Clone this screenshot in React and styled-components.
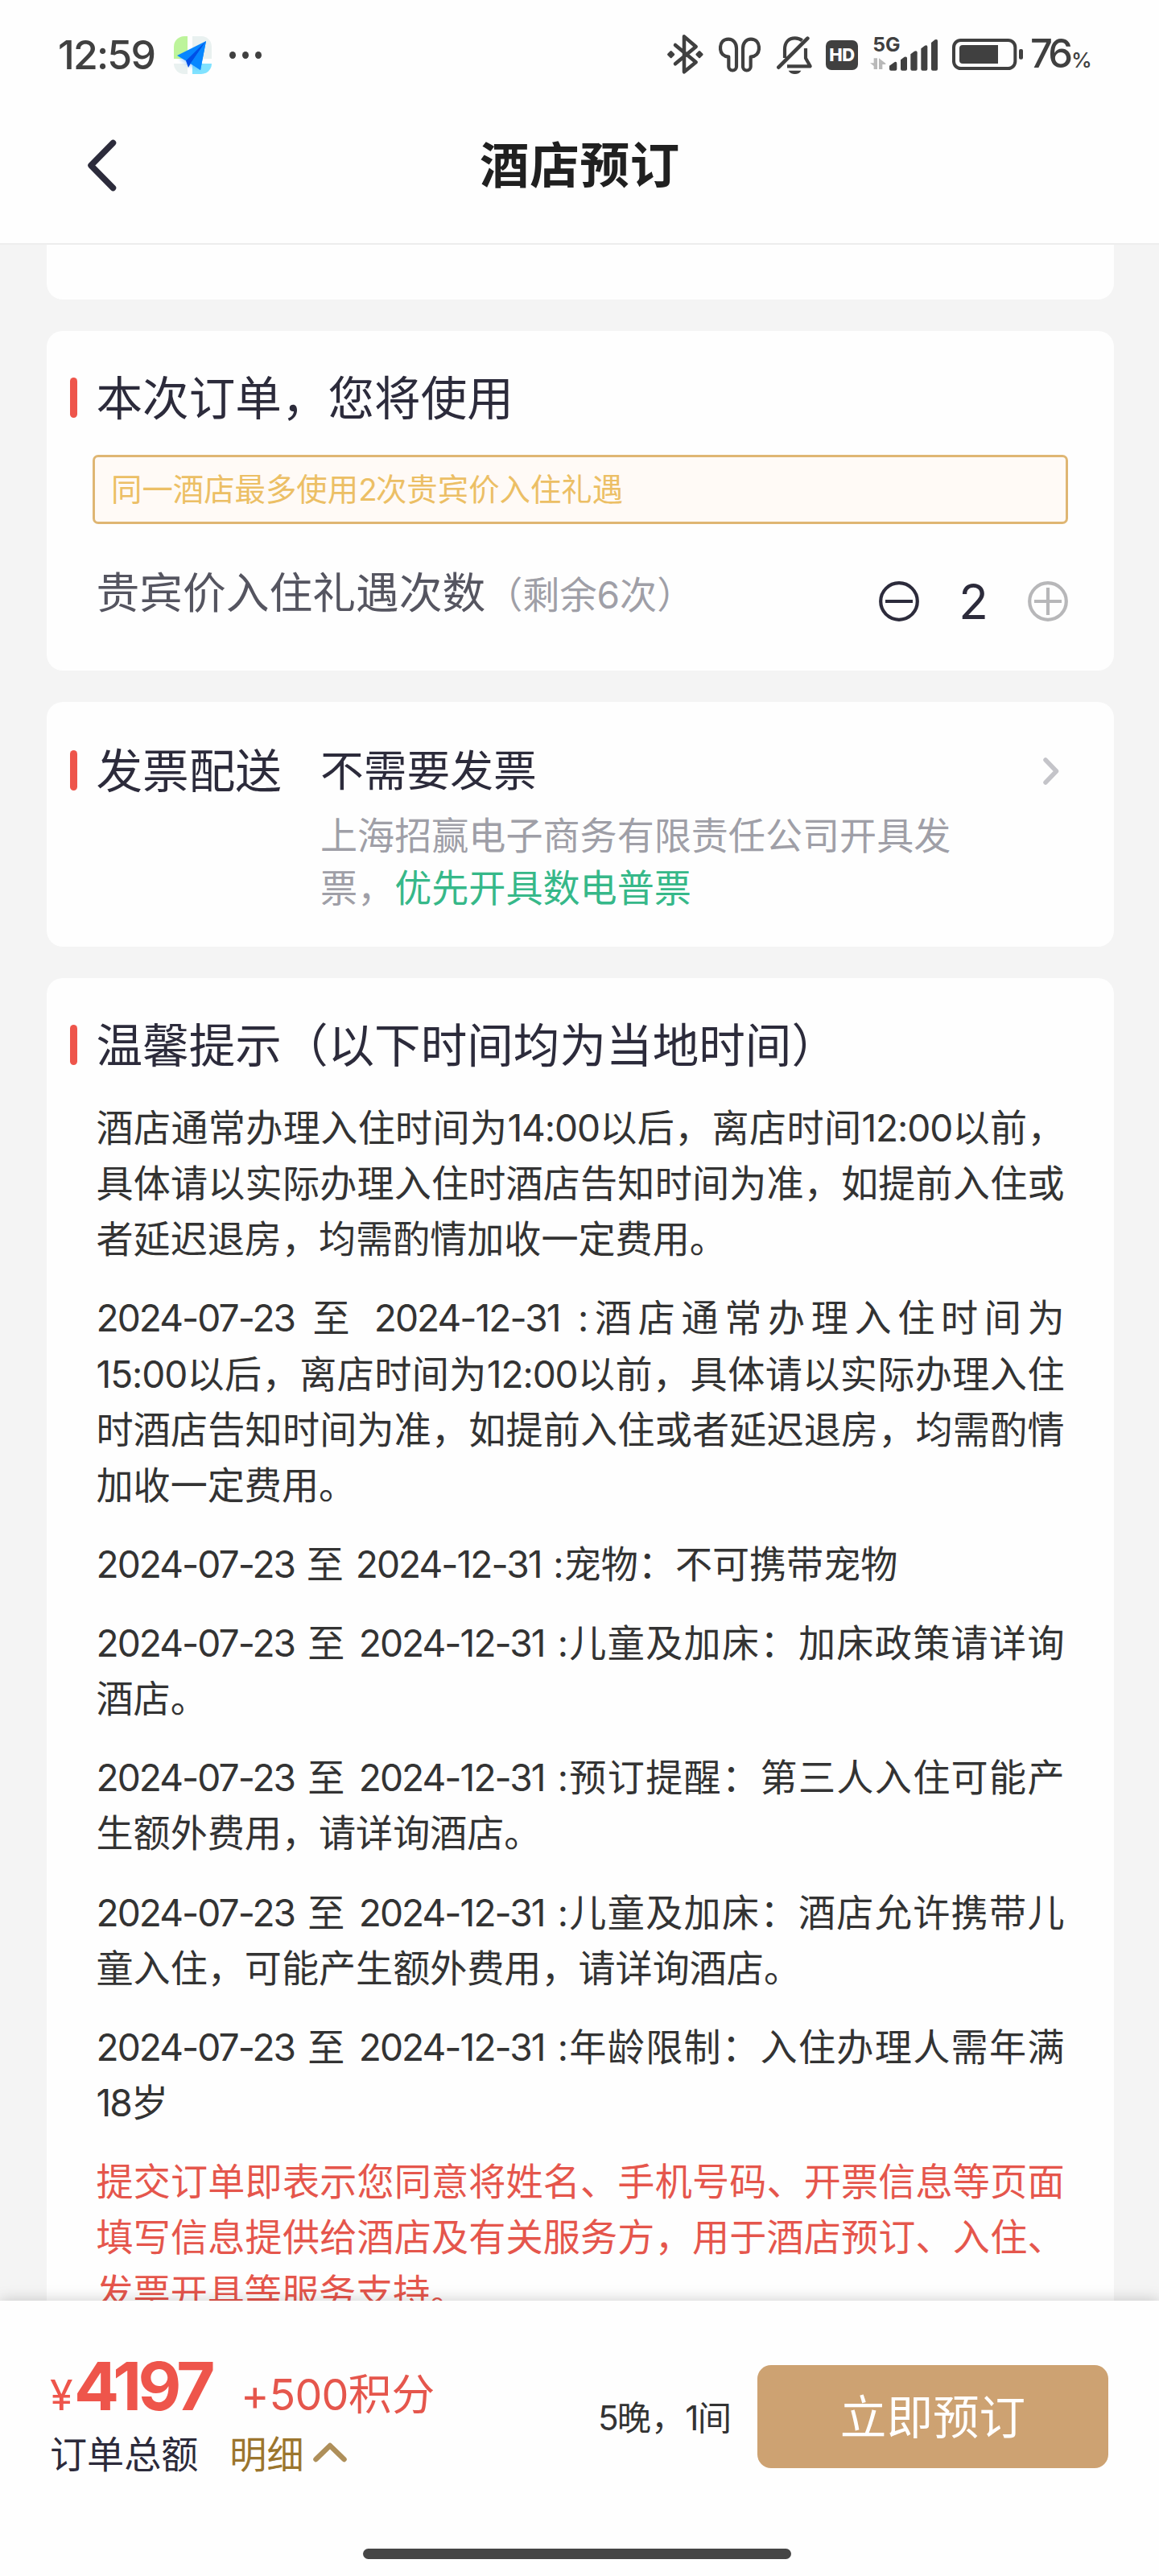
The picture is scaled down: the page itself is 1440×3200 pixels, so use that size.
import React, { useState } from "react";
import styled, { createGlobalStyle } from "styled-components";

const fontStack = `Inter, "Noto Sans CJK SC", sans-serif`;

const color = {
  ink: "#2c2b3b",
  body: "#333333",
  status: "#404040",
  muted: "#9f9fa7",
  red: "#ee554b",
  redText: "#e5564c",
  gold: "#cda272",
  page: "#f4f4f4",
};

const GlobalStyle = createGlobalStyle`
  * { box-sizing: border-box; }
  body {
    margin: 0;
    background: #fefefe;
    font-family: ${fontStack};
    text-spacing-trim: space-all;
    -webkit-font-smoothing: antialiased;
  }
  h1, h2, p { margin: 0; font-weight: 400; }
  button { font: inherit; border: 0; padding: 0; background: none; color: inherit; }
  svg { display: block; flex: none; }
`;

const Screen = styled.div`
  display: flex;
  flex-direction: column;
  width: 1440px;
  height: 3200px;
  overflow: hidden;
  background: ${color.page};
`;

/* ---------- status bar ---------- */

const Header = styled.header`
  flex: none;
  height: 304px;
  background: #fefefe;
  border-bottom: 2px solid #ededed;
`;

const StatusBar = styled.div`
  display: flex;
  justify-content: space-between;
  align-items: center;
  height: 64px;
  margin-top: 36px;
  padding: 0 84px 0 72px;
  color: ${color.status};
`;

const StatusGroup = styled.div`
  display: flex;
  align-items: center;
`;

const Clock = styled.span`
  width: 144px;
  font-size: 50px;
  line-height: 64px;
  letter-spacing: -1.8px;
  font-weight: 500;
  white-space: nowrap;
`;

const Dots = styled.span`
  display: flex;
  gap: 8px;
  margin-left: 22px;
`;

const Dot = styled.span`
  width: 8px;
  height: 9px;
  border-radius: 50%;
  background: ${color.status};
`;

const HdBadge = styled.span`
  display: flex;
  align-items: center;
  justify-content: center;
  width: 40px;
  height: 37px;
  margin: 0 15px 0 16px;
  border-radius: 7px;
  background: ${color.status};
  color: #fff;
  font-size: 22px;
  font-weight: 800;
  line-height: 1;
  letter-spacing: -0.5px;
`;

const BatteryLevel = styled.span`
  display: flex;
  align-items: baseline;
  width: 76px;
  margin: 5px 0 0 9px;
  font-size: 49px;
  line-height: 64px;
  font-weight: 500;
  letter-spacing: -5px;
  white-space: nowrap;

  small {
    margin-left: 3px;
    font-size: 26px;
    letter-spacing: 0;
  }
`;

const AppIcon = () => (
  <svg width="47" height="47" viewBox="0 0 47 47">
    <defs>
      <clipPath id="tile"><rect width="47" height="47" rx="13" /></clipPath>
      <filter id="soft" x="-30%" y="-30%" width="160%" height="160%"><feGaussianBlur stdDeviation="2.2" /></filter>
    </defs>
    <g clipPath="url(#tile)">
      <rect width="47" height="47" fill="#fff" />
      <rect width="17" height="28" fill="#bdf49b" />
      <rect x="23" width="24" height="28" fill="#e9f1f0" />
      <rect y="34" width="17" height="13" fill="#e9f1f0" />
      <rect x="23" y="34" width="24" height="13" fill="#80e2ff" />
      <path d="M7 28 L34 12 L31 42 L18 36Z" fill="#4aa5ff" opacity=".45" filter="url(#soft)" />
    </g>
    <path d="M40 6 L4 24 L15 30.5 L33 42Z" fill="#0787ff" />
    <path d="M40 6 L15 30.5 L18 39 L21 33.5Z" fill="#0050e6" />
    <path d="M40 6 L21 33.5 L33 42Z" fill="#0787ff" />
  </svg>
);

const BluetoothIcon = () => (
  <svg width="45" height="64" viewBox="27 0 135 192" fill="none" stroke={color.status}>
    <path d="M57 60 L134 124 L90 160 V28 L134 66 L57 130" strokeWidth="13.5" strokeLinecap="round" strokeLinejoin="round" />
    <path d="M41 86 L50 95 L41 104 L32 95Z M147 86 L156 95 L147 104 L138 95Z" fill={color.status} strokeWidth="9" strokeLinejoin="round" />
  </svg>
);

const EarbudsIcon = styled(({ className }) => (
  <svg className={className} width="52" height="64" viewBox="219 0 156 192" fill="none" stroke={color.status} strokeWidth="12.5" strokeLinejoin="round">
    <path d="M285 72 V140 a14.5 14.5 0 0 1 -29 0 V104 C236 102 225 90 225 71 C225 50 237 38 255 38 S285 52 285 72Z" />
    <path d="M309 72 V140 a14.5 14.5 0 0 0 29 0 V104 C358 102 369 90 369 71 C369 50 357 38 339 38 S309 52 309 72Z" />
  </svg>
))`
  margin-left: 19px;
`;

const MutedBellIcon = styled(({ className }) => (
  <svg className={className} width="45" height="64" viewBox="435 0 135 192" fill="none" stroke={color.status} strokeWidth="12.5">
    <path d="M442 143 L550 35" strokeLinecap="round" strokeWidth="14" />
    <path d="M465 108 V76 C465 48 481 34 503 34 C515 34 523 37 530 43" />
    <path d="M543 72 V109 L560 139 H474" strokeLinejoin="round" />
    <path d="M479 155 H526 C520 172 486 172 479 155Z" fill={color.status} stroke="none" />
  </svg>
))`
  margin-left: 20px;
`;

const SignalIcon = () => (
  <svg width="85" height="64" viewBox="27 0 255 192" fill={color.status}>
    <text x="37" y="84" fontFamily="Inter, sans-serif" fontWeight="700" fontSize="72" textLength="103" lengthAdjust="spacingAndGlyphs">5G</text>
    <path d="M54 109 V150 H41 V138 L27 127 H41 V109Z M60 150 V109 L85 128 V132 H73 V150Z" fill="#b9b9b9" />
    <path d="M99 137 L119 123 Q127 121 127 129 V149 Q127 155 121 155 H105 Q99 155 99 149Z" />
    <path d="M141 115 L155 104 Q165 101 165 109 V149 Q165 155 159 155 H147 Q141 155 141 149Z" />
    <path d="M178 94 L192 83 Q203 79 203 88 V149 Q203 155 197 155 H184 Q178 155 178 149Z" />
    <path d="M217 73 L231 62 Q241 58 241 67 V149 Q241 155 235 155 H223 Q217 155 217 149Z" />
    <path d="M255 51 L269 40 Q279 36 279 45 V149 Q279 155 273 155 H261 Q255 155 255 149Z" />
  </svg>
);

const BatteryIcon = styled(({ className }) => (
  <svg className={className} width="88" height="64" viewBox="333 0 264 192">
    <rect x="339" y="42" width="229" height="105" rx="26" fill="none" stroke={color.status} strokeWidth="12" />
    <path d="M372 60 H504 V129 H372 Q360 129 360 117 V72 Q360 60 372 60Z" fill={color.status} />
    <rect x="582" y="75" width="15" height="38" rx="6" fill={color.status} />
  </svg>
))`
  margin-left: 17px;
`;

/* ---------- title bar ---------- */

const TitleBar = styled.div`
  display: grid;
  grid-template-columns: 48px 1fr 48px;
  align-items: center;
  height: 210px;
  padding: 0 100px 0 101px;
`;

const PageTitle = styled.h1`
  padding-top: 2px;
  text-align: center;
  font-size: 61.44px;
  line-height: 84px;
  font-weight: 700;
  letter-spacing: 0.8px;
  color: #202020;
`;

/* ---------- content ---------- */

const Content = styled.main`
  flex: 1;
  min-height: 0;
  overflow: hidden;
  display: flex;
  flex-direction: column;
  gap: 39px;
  padding: 0 56px 0 58px;
`;

const Card = styled.section`
  flex: none;
  height: ${(p) => p.$height}px;
  padding: ${(p) => p.$top || 0}px 57px 0 29px;
  background: #fefefe;
  border-radius: ${(p) => (p.$cut ? "0 0 20px 20px" : "20px")};
`;

const Heading = styled.div`
  display: flex;
  align-items: center;
  gap: 23.5px;
  height: 80px;
`;

const Marker = styled.span`
  flex: none;
  width: 9px;
  height: 50px;
  margin-bottom: 2px;
  border-radius: 5px;
  background: ${color.red};
`;

const HeadingText = styled.h2`
  font-size: 57.6px;
  line-height: 80px;
  color: ${color.ink};
  white-space: nowrap;
`;

const Notice = styled.div`
  height: 86px;
  margin: 30px 0 0 28px;
  padding-left: 20px;
  border: 3px solid #dfb673;
  border-radius: 7px;
  background: #fffaf6;
  color: #ecbf65;
  font-size: 38.4px;
  line-height: 80px;
  white-space: nowrap;
`;

const UsageRow = styled.div`
  display: flex;
  justify-content: space-between;
  margin: 48px 0 0 32.5px;
`;

const UsageLabel = styled.div`
  font-size: 53.76px;
  line-height: 75px;
  color: #555560;
  white-space: nowrap;
`;

const Remaining = styled.span`
  font-size: 46.08px;
  color: ${color.muted};
`;

const Stepper = styled.div`
  display: flex;
  align-items: center;
  margin-top: 23px;
  height: 50px;
`;

const Count = styled.span`
  width: 135px;
  text-align: center;
  font-size: 60px;
  line-height: 50px;
  color: ${color.ink};
`;

const InvoiceRow = styled.div`
  display: grid;
  grid-template-columns: 311px 1fr 31px;
  align-items: start;
`;

const InvoiceBody = styled.div`
  width: 810px;
  font-size: 53.76px;
  line-height: 80px;
  color: ${color.ink};
`;

const InvoiceHint = styled.p`
  margin-top: 8px;
  font-size: 46.08px;
  line-height: 65px;
  color: ${color.muted};

  em {
    font-style: normal;
    color: #36b889;
  }
`;

const ArrowSlot = styled.div`
  display: flex;
  align-items: center;
  height: 80px;
`;

const Tips = styled.div`
  display: flex;
  flex-direction: column;
  gap: 29px;
  width: 1203px;
  margin: 28px 0 0 32.5px;
`;

const Tip = styled.p`
  font-size: 46.08px;
  line-height: 69.12px;
  word-spacing: 1.8px;
  text-align: justify;
  color: ${(p) => (p.$warn ? color.redText : color.body)};
`;

const Latin = styled.span`
  letter-spacing: ${(p) => (p.$time ? "-0.024em" : "-0.042em")};
`;

/* ---------- footer ---------- */

const Footer = styled.footer`
  position: relative;
  flex: none;
  display: flex;
  flex-direction: column;
  align-items: center;
  height: 342px;
  background: #fefefe;
  box-shadow: 0 0 18px rgba(0, 0, 0, 0.2);
`;

const Checkout = styled.div`
  display: flex;
  justify-content: space-between;
  width: 100%;
  height: 308px;
  padding: 0 63px 0 62px;
`;

const Totals = styled.div`
  padding-top: 62px;
`;

const PriceLine = styled.div`
  display: flex;
  align-items: baseline;
  height: 88px;
  line-height: 88px;
  color: ${color.red};
  white-space: nowrap;
`;

const Currency = styled.span`
  width: 30px;
  font-size: 52px;
  letter-spacing: -2px;
`;

const Amount = styled.span`
  width: 207px;
  font-size: 83px;
  font-weight: 700;
  letter-spacing: -4.6px;
`;

const Points = styled.span`
  font-size: 53.76px;
  color: ${color.redText};

  ${Latin} {
    letter-spacing: -0.015em;
  }
`;

const SummaryLine = styled.div`
  display: flex;
  align-items: center;
  height: 76px;
  font-size: 46.08px;
  color: ${color.ink};
`;

const DetailToggle = styled.button`
  display: flex;
  align-items: center;
  gap: 10px;
  margin-left: 39px;
  color: #9b752d;
`;

const Actions = styled.div`
  display: flex;
  align-items: center;
  gap: 32px;
  height: 128px;
  margin-top: 80px;
`;

const Stay = styled.span`
  padding-bottom: 3px;
  font-size: 42.24px;
  color: ${color.body};
  white-space: nowrap;
`;

const BookButton = styled.button`
  width: 436px;
  height: 128px;
  padding-bottom: 7px;
  border-radius: 17px;
  background: ${color.gold};
  color: #fff;
  font-size: 57.6px;
`;

const HomeIndicator = styled.span`
  width: 532px;
  height: 13px;
  margin-left: -6px;
  border-radius: 7px;
  background: #464646;
`;

/* ---------- pieces ---------- */

const BackIcon = () => (
  <svg width="48" height="72" viewBox="0 0 48 72" fill="none" stroke={color.ink} strokeWidth="7.5" strokeLinecap="round" strokeLinejoin="round">
    <path d="M39.5 8.5 L12 36.5 L39.5 64.5" />
  </svg>
);

const RoundIcon = ({ plus, stroke }) => (
  <svg width="50" height="50" viewBox="0 0 50 50" fill="none" stroke={stroke} strokeWidth="4.2">
    <circle cx="25" cy="25" r="22.8" />
    <path d={plus ? "M8 25 H42 M25 8 V42" : "M8 25 H42"} />
  </svg>
);

const latinRun = /([0-9][0-9:\-]*)/;

const Mixed = ({ children }) =>
  children.split(latinRun).map((part, i) =>
    i % 2 ? <Latin key={i} $time={part.includes(":")}>{part}</Latin> : part
  );

const SectionHeading = ({ children }) => (
  <Heading>
    <Marker />
    <HeadingText>{children}</HeadingText>
  </Heading>
);

/* \u2060 keeps a time together with the character that follows it */
const tips = [
  "酒店通常办理入住时间为14:00以后，离店时间12:00以前，具体请以实际办理入住时酒店告知时间为准，如提前入住或者延迟退房，均需酌情加收一定费用。",
  "2024-07-23 至 2024-12-31 :酒店通常办理入住时间为15:00\u2060以后，离店时间为12:00以前，具体请以实际办理入住时酒店告知时间为准，如提前入住或者延迟退房，均需酌情加收一定费用。",
  "2024-07-23 至 2024-12-31 :宠物：不可携带宠物",
  "2024-07-23 至 2024-12-31 :儿童及加床：加床政策请详询酒店。",
  "2024-07-23 至 2024-12-31 :预订提醒：第三人入住可能产生额外费用，请详询酒店。",
  "2024-07-23 至 2024-12-31 :儿童及加床：酒店允许携带儿童入住，可能产生额外费用，请详询酒店。",
  "2024-07-23 至 2024-12-31 :年龄限制：入住办理人需年满18岁",
];

export default function App() {
  const [count, setCount] = useState(2);

  return (
    <Screen lang="zh-CN">
      <GlobalStyle />
      <Header>
        <StatusBar>
          <StatusGroup>
            <Clock>12:59</Clock>
            <AppIcon />
            <Dots><Dot /><Dot /><Dot /></Dots>
          </StatusGroup>
          <StatusGroup>
            <BluetoothIcon />
            <EarbudsIcon />
            <MutedBellIcon />
            <HdBadge>HD</HdBadge>
            <SignalIcon />
            <BatteryIcon />
            <BatteryLevel>76<small>%</small></BatteryLevel>
          </StatusGroup>
        </StatusBar>
        <TitleBar>
          <button aria-label="返回"><BackIcon /></button>
          <PageTitle>酒店预订</PageTitle>
        </TitleBar>
      </Header>

      <Content>
        <Card $height={68} $cut />

        <Card $height={422} $top={44}>
          <SectionHeading>本次订单，您将使用</SectionHeading>
          <Notice><Mixed>同一酒店最多使用2次贵宾价入住礼遇</Mixed></Notice>
          <UsageRow>
            <UsageLabel>
              贵宾价入住礼遇次数<Remaining>（剩余6次）</Remaining>
            </UsageLabel>
            <Stepper>
              <button aria-label="减少" onClick={() => setCount(Math.max(0, count - 1))}>
                <RoundIcon stroke={color.ink} />
              </button>
              <Count>{count}</Count>
              <button aria-label="增加" disabled><RoundIcon plus stroke="#b7b7b9" /></button>
            </Stepper>
          </UsageRow>
        </Card>

        <Card $height={304} $top={46}>
          <InvoiceRow>
            <SectionHeading>发票配送</SectionHeading>
            <InvoiceBody>
              不需要发票
              <InvoiceHint>上海招赢电子商务有限责任公司开具发票，<em>优先开具数电普票</em></InvoiceHint>
            </InvoiceBody>
            <ArrowSlot>
              <svg width="22" height="36" viewBox="0 0 22 36" fill="none" stroke="#c4c4c9" strokeWidth="5.5" strokeLinecap="round" strokeLinejoin="round">
                <path d="M3 4 L16.5 18 L3 32" />
              </svg>
            </ArrowSlot>
          </InvoiceRow>
        </Card>

        <Card $height={1800} $top={44}>
          <SectionHeading>温馨提示（以下时间均为当地时间）</SectionHeading>
          <Tips>
            {tips.map((t) => <Tip key={t}><Mixed>{t}</Mixed></Tip>)}
            <Tip $warn>
              提交订单即表示您同意将姓名、手机号码、开票信息等页面填写信息提供给酒店及有关服务方，用于酒店预订、入住、发票开具等服务支持。
            </Tip>
          </Tips>
        </Card>
      </Content>

      <Footer>
        <Checkout>
          <Totals>
            <PriceLine>
              <Currency>¥</Currency>
              <Amount>4197</Amount>
              <Points><Mixed>+500积分</Mixed></Points>
            </PriceLine>
            <SummaryLine>
              订单总额
              <DetailToggle>
                明细
                <svg width="44" height="28" viewBox="0 0 44 28" fill="none" stroke="#ae8f5a" strokeWidth="6.5" strokeLinecap="round" strokeLinejoin="round">
                  <path d="M4.5 23 L22 6 L39.5 23" />
                </svg>
              </DetailToggle>
            </SummaryLine>
          </Totals>
          <Actions>
            <Stay><Mixed>5晚，1间</Mixed></Stay>
            <BookButton>立即预订</BookButton>
          </Actions>
        </Checkout>
        <HomeIndicator />
      </Footer>
    </Screen>
  );
}
